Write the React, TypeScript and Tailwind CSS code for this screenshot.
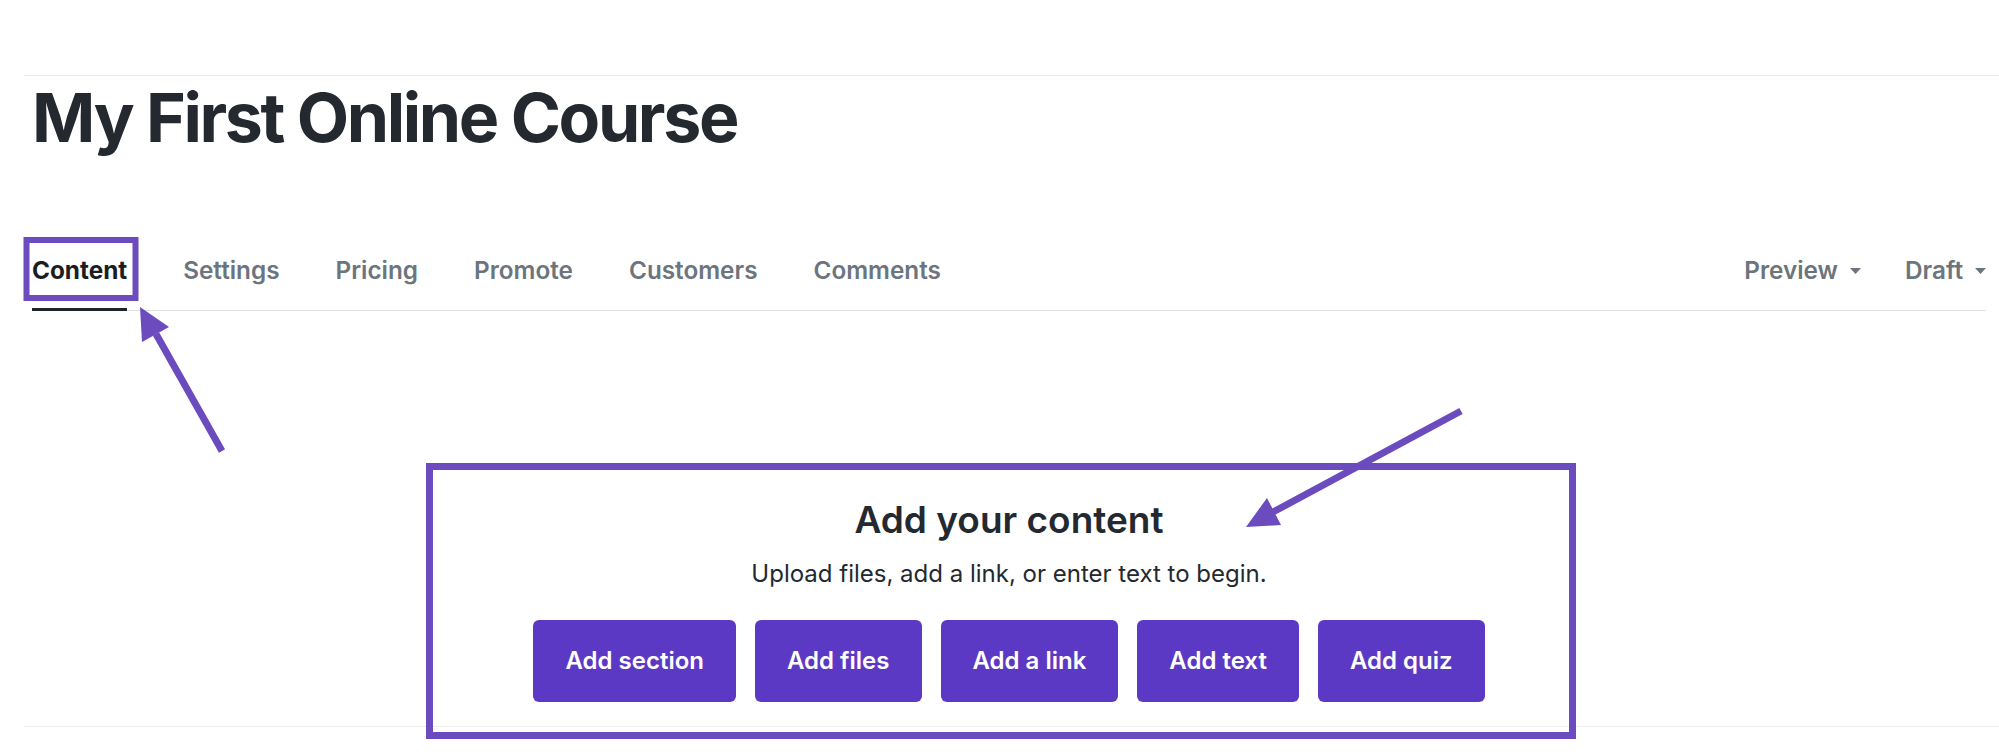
const tabs = ['Content', 'Settings', 'Pricing', 'Promote', 'Customers', 'Comments'];
const actions = ['Add section', 'Add files', 'Add a link', 'Add text', 'Add quiz'];

function Caret() {
  return (
    <svg width="11" height="6" viewBox="0 0 11 6" className="ml-3 mt-[2px]">
      <path d="M0 0h11L5.5 6z" fill="#6c757d" />
    </svg>
  );
}

// annotation layer drawn over the page (boxes + arrows)
function Annotations() {
  const c = '#6b4bbe';
  return (
    <svg className="pointer-events-none absolute left-0 top-0" width="1999" height="755">
      <rect x="26.5" y="240" width="109" height="58" fill="none" stroke={c} strokeWidth="6" />
      <rect x="429.5" y="466.5" width="1143" height="269" fill="none" stroke={c} strokeWidth="7" />
      <line x1="222" y1="451" x2="156" y2="334" stroke={c} strokeWidth="7" />
      <polygon points="140,307 169,327 142,342" fill={c} />
      <line x1="1461" y1="411" x2="1273" y2="512" stroke={c} strokeWidth="7" />
      <polygon points="1246,527 1267,498 1281,525" fill={c} />
    </svg>
  );
}

export default function App() {
  return (
    <div className="relative h-[755px] overflow-hidden bg-white font-['Inter','Liberation_Sans',sans-serif]">
      <div className="pl-6 pt-[75px]">
        <div className="border-t border-[#e9ecef] pr-[13px] pl-2">
          <h1 className="mt-[1px] text-[68px] leading-[1.2] font-bold tracking-[-0.035em] text-[#23292f]">
            My First Online Course
          </h1>

          <div className="mt-[93px] flex items-start border-b border-[#dfe2e5]">
            <div className="flex gap-[56px]">
              {tabs.map((t, i) => (
                <div
                  key={t}
                  className={`-mb-px pb-[20px] text-[24.3px] leading-[36px] ${
                    i === 0
                      ? 'border-b-[3px] border-[#1f2428] font-bold text-[#1a1d21]'
                      : 'border-b-[3px] border-transparent font-semibold text-[#6c757d]'
                  }`}
                >
                  {t}
                </div>
              ))}
            </div>
            <div className="ml-auto flex gap-[44px] text-[24.3px] leading-[36px] font-semibold text-[#6c757d]">
              <div className="flex items-center">
                Preview
                <Caret />
              </div>
              <div className="flex items-center">
                Draft
                <Caret />
              </div>
            </div>
          </div>
        </div>

        <div className="flex flex-col items-center border-b border-[#eceef0] pt-[187px] pb-[24px] pr-[13px] pl-2 text-[#23292f]">
          <h2 className="text-[37px] leading-[1.2] font-semibold">Add your content</h2>
          <p className="mt-[14px] text-[24px] leading-[36px]">Upload files, add a link, or enter text to begin.</p>
          <div className="mt-[28px] flex gap-[19px]">
            {actions.map((a) => (
              <button
                key={a}
                className="flex h-[82px] items-center rounded-md bg-[#5c39c4] px-8 text-[24px] font-semibold text-white"
              >
                {a}
              </button>
            ))}
          </div>
        </div>
      </div>
      <Annotations />
    </div>
  );
}
